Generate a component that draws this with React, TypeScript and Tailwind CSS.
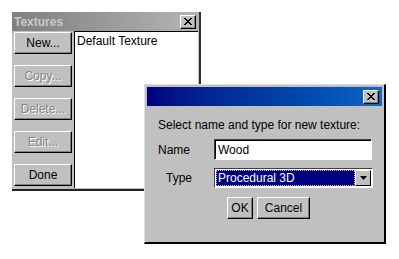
import React from "react";

const font = { fontFamily: '"Liberation Sans", Arial, sans-serif' };

function CloseBox() {
  return (
    <div className="w-[16px] h-[14px] bg-[#c0c0c0] border-t border-l border-t-white border-l-white border-r border-b border-r-black border-b-black flex items-center justify-center shadow-[inset_-1px_-1px_0_#808080]">
      <svg width="8" height="7" viewBox="0 0 8 7">
        <path d="M0 0L7 7M1 0L8 7M7 0L0 7M8 0L1 7" stroke="black" strokeWidth="1" />
      </svg>
    </div>
  );
}

function WinButton({ label, disabled, className = "" }: { label: string; disabled?: boolean; className?: string }) {
  return (
    <div
      className={`h-[22px] bg-[#c0c0c0] border-t border-l border-t-white border-l-white border-r border-b border-r-black border-b-black shadow-[inset_-1px_-1px_0_#808080] flex items-center justify-center text-[12px] ${
        disabled ? "text-[#868686] [text-shadow:1px_1px_0_#ffffff]" : "text-black"
      } ${className}`}
    >
      {label}
    </div>
  );
}

export default function App() {
  return (
    <div className="relative w-[399px] h-[259px] bg-white overflow-hidden" style={font}>
      {/* Textures window */}
      <div className="absolute left-[12px] top-[12px] w-[189px] h-[179px] bg-[#c0c0c0] border-r-2 border-b-2 border-r-[#303030] border-b-[#202020] flex flex-col">
        <div className="h-[19px] bg-gradient-to-r from-[#808080] to-[#b4b4b4] flex items-center justify-between pl-[2px] pr-[3px]">
          <span className="text-[12px] font-bold text-[#c8c8c8]">Textures</span>
          <CloseBox />
        </div>
        <div className="flex flex-1">
          <div className="w-[62px] flex flex-col gap-[11px] pl-[2px] pt-[1px]">
            <WinButton label="New..." className="w-[58px]" />
            <WinButton label="Copy..." disabled className="w-[58px]" />
            <WinButton label="Delete..." disabled className="w-[58px]" />
            <WinButton label="Edit..." disabled className="w-[58px]" />
            <WinButton label="Done" className="w-[58px]" />
          </div>
          <div className="flex-1 mr-[1px] mb-[1px] bg-white border-t border-l border-t-black border-l-black pl-[2px] pt-[2px] text-[12px] leading-[14px] text-black">
            Default Texture
          </div>
        </div>
      </div>

      {/* New texture dialog */}
      <div className="absolute left-[144px] top-[84px] w-[242px] h-[160px] bg-[#c0c0c0] border-t border-l border-t-[#e0e0e0] border-l-[#e0e0e0] border-r-2 border-b-2 border-r-black border-b-black p-[2px] flex flex-col">
        <div className="h-[19px] bg-gradient-to-r from-[#000080] to-[#1466c4] flex items-center justify-end pr-[3px]">
          <CloseBox />
        </div>
        <div className="flex flex-col pl-[11px] pt-[12px] text-[12px] text-black">
          <div className="leading-[14px]">Select name and type for new texture:</div>
          <div className="flex items-center mt-[7px]">
            <span className="w-[56px]">Name</span>
            <div className="w-[158px] h-[21px] bg-white border-t border-l border-t-[#404040] border-l-[#404040] border-r border-b border-r-white border-b-white shadow-[inset_1px_1px_0_#000000] flex items-center pl-[3px]">
              Wood
            </div>
          </div>
          <div className="flex items-center mt-[8px]">
            <span className="w-[56px] pl-[8px]">Type</span>
            <div className="w-[159px] h-[20px] bg-white border-t border-l border-t-[#404040] border-l-[#404040] border-r border-b border-r-white border-b-white flex items-center p-[1px]">
              <div className="flex-1 h-full bg-[#000080] outline-1 outline-dotted outline-[#c0c0c0] -outline-offset-1 text-white flex items-center pl-[2px]">
                Procedural 3D
              </div>
              <div className="w-[16px] h-full bg-[#c0c0c0] border-t border-l border-t-white border-l-white border-r border-b border-r-black border-b-black flex items-center justify-center">
                <svg width="7" height="4" viewBox="0 0 7 4">
                  <path d="M0 0H7L3.5 4Z" fill="black" />
                </svg>
              </div>
            </div>
          </div>
          <div className="flex gap-[4px] mt-[9px] ml-[69px]">
            <WinButton label="OK" className="w-[26px] h-[22px]" />
            <WinButton label="Cancel" className="w-[53px] h-[22px]" />
          </div>
        </div>
      </div>
    </div>
  );
}
